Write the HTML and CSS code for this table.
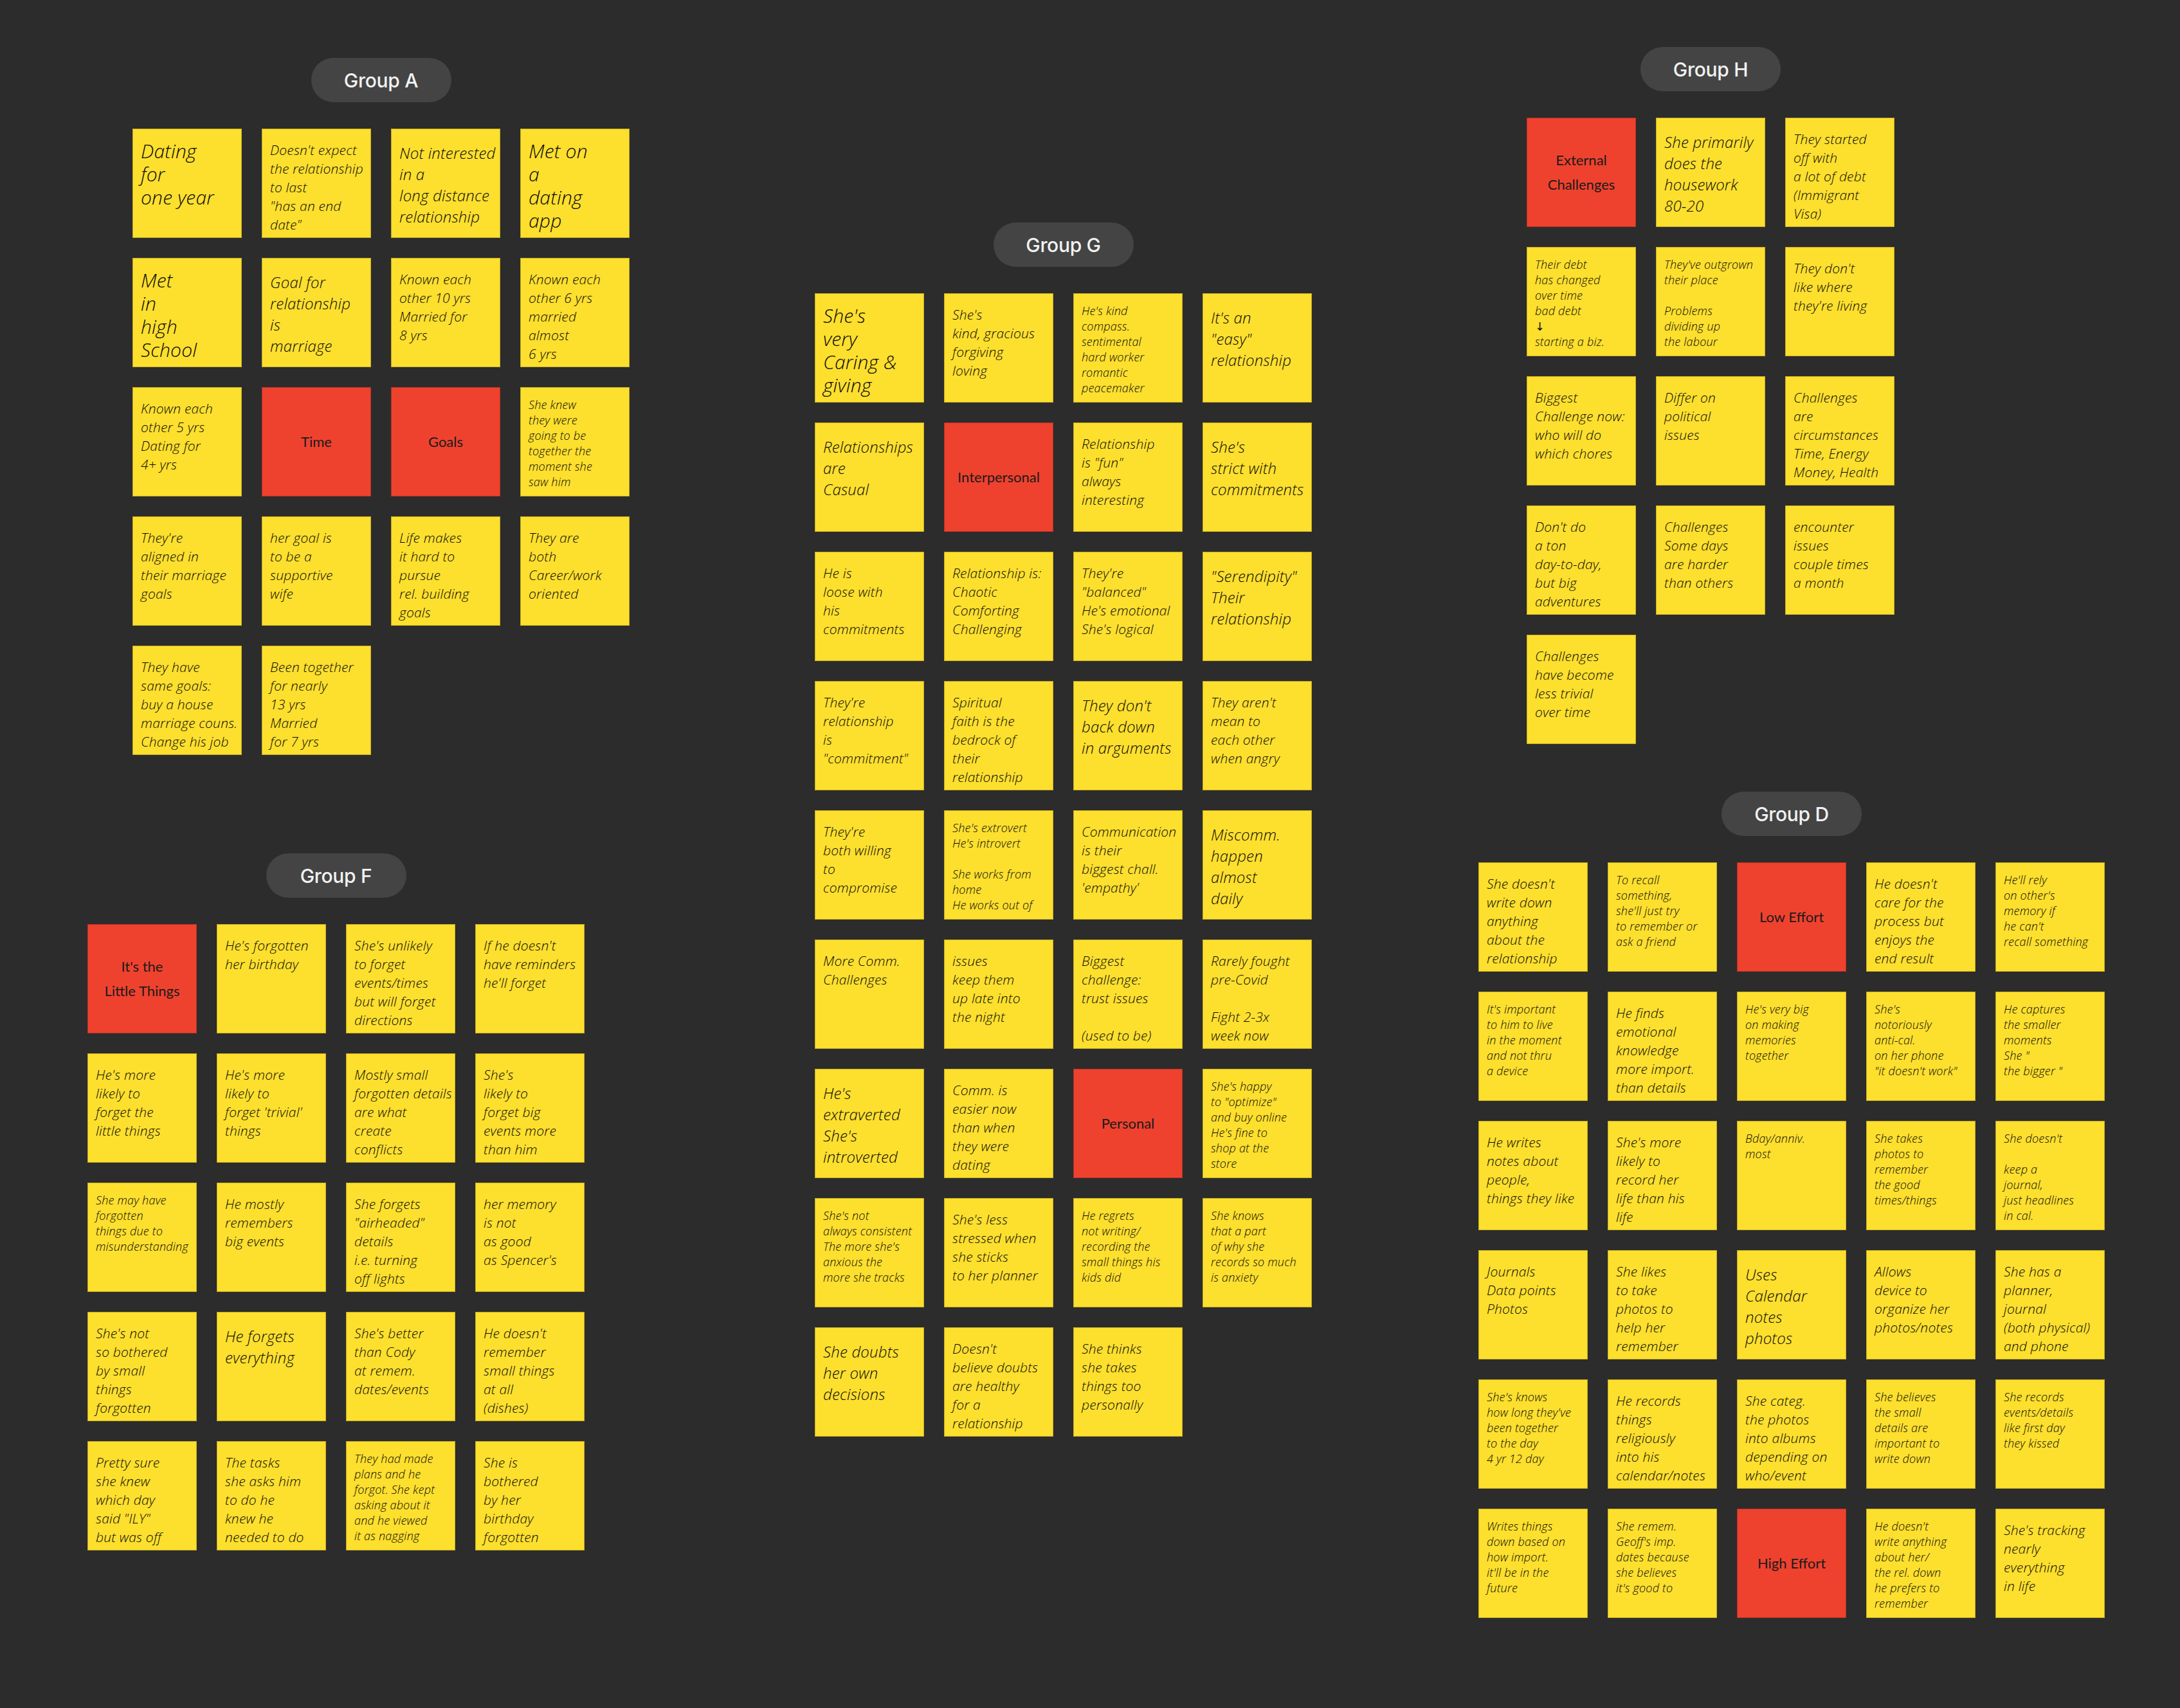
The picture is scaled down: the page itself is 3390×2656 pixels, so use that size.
FILE: index.html
```html
<!DOCTYPE html>
<html lang="en">
<head>
<meta charset="utf-8">
<title>Affinity board</title>
<link rel="stylesheet" href="styles.css">
</head>
<body>
<main class="board">

  <section class="group g-a">
    <div class="pill">Group A</div>
    <div class="grid cols4">
      <div class="note big">Dating<br>for<br>one year</div>
      <div class="note sm">Doesn't expect<br>the relationship<br>to last<br>"has an end<br>date"</div>
      <div class="note med">Not interested<br>in a<br>long distance<br>relationship</div>
      <div class="note big">Met on<br>a<br>dating<br>app</div>
      <div class="note big">Met<br>in<br>high<br>School</div>
      <div class="note med">Goal for<br>relationship<br>is<br>marriage</div>
      <div class="note sm">Known each<br>other 10 yrs<br>Married for<br>8 yrs</div>
      <div class="note sm">Known each<br>other 6 yrs<br>married<br>almost<br>6 yrs</div>
      <div class="note sm">Known each<br>other 5 yrs<br>Dating for<br>4+ yrs</div>
      <div class="note red">Time</div>
      <div class="note red">Goals</div>
      <div class="note xs">She knew<br>they were<br>going to be<br>together the<br>moment she<br>saw him</div>
      <div class="note sm">They're<br>aligned in<br>their marriage<br>goals</div>
      <div class="note sm">her goal is<br>to be a<br>supportive<br>wife</div>
      <div class="note sm">Life makes<br>it hard to<br>pursue<br>rel. building<br>goals</div>
      <div class="note sm">They are<br>both<br>Career/work<br>oriented</div>
      <div class="note sm">They have<br>same goals:<br>buy a house<br>marriage couns.<br>Change his job</div>
      <div class="note sm">Been together<br>for nearly<br>13 yrs<br>Married<br>for 7 yrs</div>
    </div>
  </section>

  <section class="group g-h">
    <div class="pill">Group H</div>
    <div class="grid cols3">
      <div class="note red">External<br>Challenges</div>
      <div class="note med">She primarily<br>does the<br>housework<br>80-20</div>
      <div class="note sm">They started<br>off with<br>a lot of debt<br>(Immigrant<br>Visa)</div>
      <div class="note xs">Their debt<br>has changed<br>over time<br>bad debt<br>↓<br>starting a biz.</div>
      <div class="note xs">They've outgrown<br>their place<br><br>Problems<br>dividing up<br>the labour</div>
      <div class="note sm">They don't<br>like where<br>they're living</div>
      <div class="note sm">Biggest<br>Challenge now:<br>who will do<br>which chores</div>
      <div class="note sm">Differ on<br>political<br>issues</div>
      <div class="note sm">Challenges<br>are<br>circumstances<br>Time, Energy<br>Money, Health</div>
      <div class="note sm">Don't do<br>a ton<br>day-to-day,<br>but big<br>adventures</div>
      <div class="note sm">Challenges<br>Some days<br>are harder<br>than others</div>
      <div class="note sm">encounter<br>issues<br>couple times<br>a month</div>
      <div class="note sm">Challenges<br>have become<br>less trivial<br>over time</div>
    </div>
  </section>

  <section class="group g-g">
    <div class="pill">Group G</div>
    <div class="grid cols4">
      <div class="note big">She's<br>very<br>Caring &amp;<br>giving</div>
      <div class="note sm">She's<br>kind, gracious<br>forgiving<br>loving</div>
      <div class="note xs">He's kind<br>compass.<br>sentimental<br>hard worker<br>romantic<br>peacemaker</div>
      <div class="note med">It's an<br>"easy"<br>relationship</div>
      <div class="note med">Relationships<br>are<br>Casual</div>
      <div class="note red">Interpersonal</div>
      <div class="note sm">Relationship<br>is "fun"<br>always<br>interesting</div>
      <div class="note med">She's<br>strict with<br>commitments</div>
      <div class="note sm">He is<br>loose with<br>his commitments</div>
      <div class="note sm">Relationship is:<br>Chaotic<br>Comforting<br>Challenging</div>
      <div class="note sm">They're<br>"balanced"<br>He's emotional<br>She's logical</div>
      <div class="note med">"Serendipity"<br>Their<br>relationship</div>
      <div class="note sm">They're<br>relationship<br>is<br>"commitment"</div>
      <div class="note sm">Spiritual<br>faith is the<br>bedrock of<br>their<br>relationship</div>
      <div class="note med">They don't<br>back down<br>in arguments</div>
      <div class="note sm">They aren't<br>mean to<br>each other<br>when angry</div>
      <div class="note sm">They're<br>both willing<br>to<br>compromise</div>
      <div class="note xs">She's extrovert<br>He's introvert<br><br>She works from<br>home<br>He works out of</div>
      <div class="note sm">Communication<br>is their<br>biggest chall.<br>'empathy'</div>
      <div class="note med">Miscomm.<br>happen<br>almost<br>daily</div>
      <div class="note sm">More Comm.<br>Challenges</div>
      <div class="note sm">issues<br>keep them<br>up late into<br>the night</div>
      <div class="note sm">Biggest<br>challenge:<br>trust issues<br><br>(used to be)</div>
      <div class="note sm">Rarely fought<br>pre-Covid<br><br>Fight 2-3x<br>week now</div>
      <div class="note med">He's<br>extraverted<br>She's<br>introverted</div>
      <div class="note sm">Comm. is<br>easier now<br>than when<br>they were<br>dating</div>
      <div class="note red">Personal</div>
      <div class="note xs">She's happy<br>to "optimize"<br>and buy online<br>He's fine to<br>shop at the<br>store</div>
      <div class="note xs">She's not<br>always consistent<br>The more she's<br>anxious the<br>more she tracks</div>
      <div class="note sm">She's less<br>stressed when<br>she sticks<br>to her planner</div>
      <div class="note xs">He regrets<br>not writing/<br>recording the<br>small things his<br>kids did</div>
      <div class="note xs">She knows<br>that a part<br>of why she<br>records so much<br>is anxiety</div>
      <div class="note med">She doubts<br>her own<br>decisions</div>
      <div class="note sm">Doesn't<br>believe doubts<br>are healthy<br>for a<br>relationship</div>
      <div class="note sm">She thinks<br>she takes<br>things too<br>personally</div>
    </div>
  </section>

  <section class="group g-f">
    <div class="pill">Group F</div>
    <div class="grid cols4">
      <div class="note red">It's the<br>Little Things</div>
      <div class="note sm">He's forgotten<br>her birthday</div>
      <div class="note sm">She's unlikely<br>to forget<br>events/times<br>but will forget<br>directions</div>
      <div class="note sm">If he doesn't<br>have reminders<br>he'll forget</div>
      <div class="note sm">He's more<br>likely to<br>forget the<br>little things</div>
      <div class="note sm">He's more<br>likely to<br>forget 'trivial'<br>things</div>
      <div class="note sm">Mostly small<br>forgotten details<br>are what<br>create<br>conflicts</div>
      <div class="note sm">She's<br>likely to<br>forget big<br>events more<br>than him</div>
      <div class="note xs">She may have<br>forgotten<br>things due to<br>misunderstanding</div>
      <div class="note sm">He mostly<br>remembers<br>big events</div>
      <div class="note sm">She forgets<br>"airheaded"<br>details<br>i.e. turning<br>off lights</div>
      <div class="note sm">her memory<br>is not<br>as good<br>as Spencer's</div>
      <div class="note sm">She's not<br>so bothered<br>by small<br>things<br>forgotten</div>
      <div class="note med">He forgets<br>everything</div>
      <div class="note sm">She's better<br>than Cody<br>at remem.<br>dates/events</div>
      <div class="note sm">He doesn't<br>remember<br>small things<br>at all<br>(dishes)</div>
      <div class="note sm">Pretty sure<br>she knew<br>which day<br>said "ILY"<br>but was off</div>
      <div class="note sm">The tasks<br>she asks him<br>to do he<br>knew he<br>needed to do</div>
      <div class="note xs">They had made<br>plans and he<br>forgot. She kept<br>asking about it<br>and he viewed<br>it as nagging</div>
      <div class="note sm">She is<br>bothered<br>by her<br>birthday<br>forgotten</div>
    </div>
  </section>

  <section class="group g-d">
    <div class="pill">Group D</div>
    <div class="grid cols5">
      <div class="note sm">She doesn't<br>write down<br>anything<br>about the<br>relationship</div>
      <div class="note xs">To recall<br>something,<br>she'll just try<br>to remember or<br>ask a friend</div>
      <div class="note red">Low Effort</div>
      <div class="note sm">He doesn't<br>care for the<br>process but<br>enjoys the<br>end result</div>
      <div class="note xs">He'll rely<br>on other's<br>memory if<br>he can't<br>recall something</div>
      <div class="note xs">It's important<br>to him to live<br>in the moment<br>and not thru<br>a device</div>
      <div class="note sm">He finds<br>emotional<br>knowledge<br>more import.<br>than details</div>
      <div class="note xs">He's very big<br>on making<br>memories<br>together</div>
      <div class="note xs">She's<br>notoriously<br>anti-cal.<br>on her phone<br>"it doesn't work"</div>
      <div class="note xs">He captures<br>the smaller<br>moments<br>She "<br>the bigger "</div>
      <div class="note sm">He writes<br>notes about<br>people,<br>things they like</div>
      <div class="note sm">She's more<br>likely to<br>record her<br>life than his<br>life</div>
      <div class="note xs">Bday/anniv.<br>most</div>
      <div class="note xs">She takes<br>photos to<br>remember<br>the good<br>times/things</div>
      <div class="note xs">She doesn't<br><br>keep a<br>journal,<br>just headlines<br>in cal.</div>
      <div class="note sm">Journals<br>Data points<br>Photos</div>
      <div class="note sm">She likes<br>to take<br>photos to<br>help her<br>remember</div>
      <div class="note med">Uses<br>Calendar<br>notes<br>photos</div>
      <div class="note sm">Allows<br>device to<br>organize her<br>photos/notes</div>
      <div class="note sm">She has a<br>planner,<br>journal<br>(both physical)<br>and phone</div>
      <div class="note xs">She's knows<br>how long they've<br>been together<br>to the day<br>4 yr 12 day</div>
      <div class="note sm">He records<br>things<br>religiously<br>into his<br>calendar/notes</div>
      <div class="note sm">She categ.<br>the photos<br>into albums<br>depending on<br>who/event</div>
      <div class="note xs">She believes<br>the small<br>details are<br>important to<br>write down</div>
      <div class="note xs">She records<br>events/details<br>like first day<br>they kissed</div>
      <div class="note xs">Writes things<br>down based on<br>how import.<br>it'll be in the<br>future</div>
      <div class="note xs">She remem.<br>Geoff's imp.<br>dates because<br>she believes<br>it's good to</div>
      <div class="note red">High Effort</div>
      <div class="note xs">He doesn't<br>write anything<br>about her/<br>the rel. down<br>he prefers to<br>remember</div>
      <div class="note sm">She's tracking<br>nearly<br>everything<br>in life</div>
    </div>
  </section>

</main>
</body>
</html>
```

FILE: styles.css
```css
html, body {
  margin: 0;
  padding: 0;
  background: #2c2c2c;
}

.board {
  position: relative;
  width: 3390px;
  height: 2656px;
  overflow: hidden;
  background: #2c2c2c;
}

/* groups sit on a free canvas */
.group {
  position: absolute;
  display: flex;
  flex-direction: column;
  align-items: center;
  gap: 41px;
}
.g-a { left: 206px; top: 90px; }
.g-h { left: 2374px; top: 73px; }
.g-g { left: 1267px; top: 346px; }
.g-f { left: 136px; top: 1327px; }
.g-d { left: 2299px; top: 1231px; }

.pill {
  width: 218px;
  height: 69px;
  border-radius: 35px;
  background: #444444;
  color: #f2f2f2;
  font-family: Inter, "Liberation Sans", sans-serif;
  font-size: 30px;
  font-weight: 500;
  display: flex;
  align-items: center;
  justify-content: center;
  letter-spacing: -0.3px;
}

.grid {
  display: grid;
  grid-auto-rows: 170px;
  gap: 31px;
}
.cols3 { grid-template-columns: repeat(3, 170px); }
.cols4 { grid-template-columns: repeat(4, 170px); }
.cols5 { grid-template-columns: repeat(5, 170px); }

.note {
  box-sizing: border-box;
  width: 170px;
  height: 170px;
  background: #fddf2e;
  border: 1px solid #c5ad22;
  color: #0a0a0a;
  font-family: "Open Sans", "DejaVu Sans", sans-serif;
  font-style: italic;
  font-weight: 300;
  padding: 18px 4px 4px 12px;
  overflow: visible;
  letter-spacing: 0.2px;
}

.big { font-size: 30px; line-height: 36px; padding-top: 16px; }
.med { font-size: 24px; line-height: 33px; padding-top: 20px; }
.sm  { font-size: 21px; line-height: 29px; }
.xs  { font-size: 18px; line-height: 24px; padding-top: 14px; }

.red {
  background: #ee422f;
  border-color: #b53224;
  display: flex;
  align-items: center;
  justify-content: center;
  text-align: center;
  padding: 0;
  font-family: Lato, "Open Sans", sans-serif;
  font-style: normal;
  font-weight: 400;
  font-size: 22px;
  line-height: 38px;
  color: #1a1a1a;
  letter-spacing: 0;
}
```
